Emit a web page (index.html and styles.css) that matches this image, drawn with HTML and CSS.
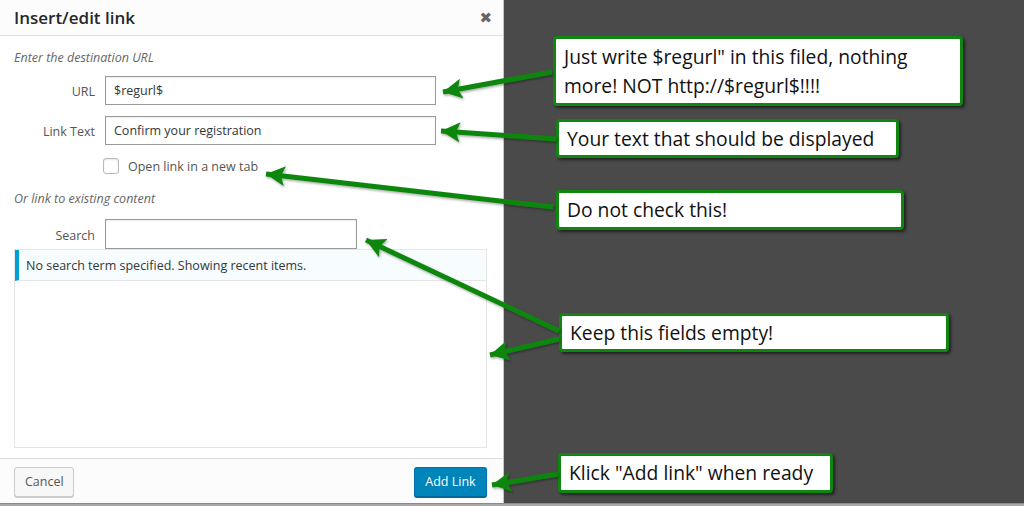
FILE: index.html
```html
<!DOCTYPE html>
<html lang="en">
<head>
<meta charset="utf-8">
<title>Insert/edit link</title>
<link rel="stylesheet" href="styles.css">
</head>
<body>
<div class="page">
  <div class="main">
    <section class="dialog">
      <header class="dlg-head">
        <h1 class="dlg-title">Insert/edit link</h1>
        <span class="dlg-close">&#x2716;</span>
      </header>
      <div class="dlg-body">
        <p class="hint hint-first">Enter the destination URL</p>
        <div class="row row-url">
          <label class="lbl">URL</label>
          <div class="field field-wide">$regurl$</div>
        </div>
        <div class="row row-text">
          <label class="lbl">Link Text</label>
          <div class="field field-wide">Confirm your registration</div>
        </div>
        <div class="check-row">
          <span class="checkbox"></span>
          <span class="check-label">Open link in a new tab</span>
        </div>
        <p class="hint hint-second">Or link to existing content</p>
        <div class="row row-search">
          <label class="lbl">Search</label>
          <div class="field field-search"></div>
        </div>
        <div class="results">
          <div class="notice">No search term specified. Showing recent items.</div>
        </div>
      </div>
      <footer class="dlg-foot">
        <button class="btn btn-cancel">Cancel</button>
        <button class="btn btn-primary">Add Link</button>
      </footer>
    </section>
    <div class="canvas">
      <div class="callout c1">Just write $regurl" in this filed, nothing more! NOT http://$regurl$!!!!</div>
      <div class="callout c2">Your text that should be displayed</div>
      <div class="callout c3">Do not check this!</div>
      <div class="callout c4">Keep this fields empty!</div>
      <div class="callout c5">Klick "Add link" when ready</div>
    </div>
  </div>
  <div class="bottom-strip"></div>
  <svg class="arrows" width="1024" height="506" viewBox="0 0 1024 506">
    <defs>
      <marker id="head" markerUnits="userSpaceOnUse" markerWidth="22" markerHeight="20" refX="19" refY="10" orient="auto">
        <path d="M0 0 L19 10 L0 20 L4 10 Z" fill="#0f860f"/>
      </marker>
      <filter id="sh" x="-10%" y="-50%" width="120%" height="200%">
        <feDropShadow dx="1" dy="1.5" stdDeviation="1" flood-color="#000" flood-opacity="0.35"/>
      </filter>
    </defs>
    <g stroke="#0f860f" stroke-width="5" fill="none" marker-end="url(#head)" filter="url(#sh)">
      <line x1="552" y1="72" x2="443" y2="92"/>
      <line x1="556" y1="139" x2="441" y2="131"/>
      <line x1="553" y1="207" x2="266" y2="174"/>
      <line x1="559" y1="331" x2="366" y2="240"/>
      <line x1="559" y1="339" x2="490" y2="355"/>
      <line x1="558" y1="474" x2="492" y2="485"/>
    </g>
  </svg>
</div>
</body>
</html>
```

FILE: styles.css
```css
* { box-sizing: border-box; }
html, body { margin: 0; padding: 0; }
body {
  width: 1024px;
  height: 506px;
  overflow: hidden;
  font-family: "Open Sans", "Noto Sans", sans-serif;
  font-size: 13px;
  color: #32373c;
}
.page {
  position: relative;
  width: 1024px;
  height: 506px;
  display: flex;
  flex-direction: column;
}
.main {
  display: flex;
  height: 503px;
}
.bottom-strip {
  height: 3px;
  background: #a9a9a9;
  border-top: 1px solid #8a8a8a;
}
.dialog {
  width: 504px;
  height: 503px;
  background: #fff;
  border-right: 1px solid #b9c9dc;
  display: flex;
  flex-direction: column;
}
.dlg-head {
  height: 36px;
  background: #fcfcfc;
  border-bottom: 1px solid #dddddd;
  display: flex;
  align-items: center;
  justify-content: space-between;
  padding: 0 11px 0 14px;
}
.dlg-title {
  margin: 0;
  font-size: 17px;
  font-weight: 600;
  color: #23282d;
  line-height: 34px;
}
.dlg-close {
  color: #666;
  font-size: 15px;
  line-height: 34px;
  font-family: "DejaVu Sans", sans-serif;
}
.dlg-body {
  flex: 1;
  padding: 0 16px 0 14px;
  display: flex;
  flex-direction: column;
}
.hint {
  margin: 0;
  font-style: italic;
  color: #666;
  line-height: 18px;
  font-size: 12.5px;
}
.hint-first { margin-top: 13px; }
.hint-second { margin-top: 15px; }
.row {
  display: flex;
  align-items: center;
  gap: 10px;
}
.row-url { margin-top: 9px; }
.row-text { margin-top: 11px; }
.row-search { margin-top: 11px; }
.lbl {
  width: 81px;
  text-align: right;
  color: #555;
  font-size: 12.5px;
  padding-top: 2px;
}
.field {
  height: 29px;
  border: 1px solid #999;
  box-shadow: inset 0 1px 2px rgba(0,0,0,.07);
  padding: 0 8px;
  display: flex;
  align-items: center;
  color: #32373c;
  font-size: 12.5px;
  background: #fff;
}
.field-wide { width: 331px; }
.field-search { width: 252px; height: 30px; }
.check-row {
  margin-top: 12px;
  padding-left: 89px;
  display: flex;
  align-items: center;
  height: 18px;
}
.checkbox {
  width: 16px;
  height: 16px;
  border: 1px solid #b4b9be;
  border-radius: 3px;
  box-shadow: inset 0 1px 2px rgba(0,0,0,.1);
  background: #fff;
}
.check-label {
  margin-left: 9px;
  color: #555;
  font-size: 12.5px;
}
.results {
  height: 199px;
  width: 473px;
  border: 1px solid #e5e5e5;
  background: #fff;
}
.notice {
  height: 31px;
  background: #f7fcfe;
  border-left: 4px solid #00a0d2;
  border-bottom: 1px solid #e5e5e5;
  padding-left: 7px;
  display: flex;
  align-items: center;
  color: #32373c;
  font-size: 12.5px;
}
.dlg-foot {
  height: 45px;
  background: #fcfcfc;
  border-top: 1px solid #dddddd;
  padding: 8px 16px 0 14px;
  display: flex;
  justify-content: space-between;
  align-items: flex-start;
}
.btn {
  height: 30px;
  border-radius: 3px;
  font-family: "Open Sans", "Noto Sans", sans-serif;
  font-size: 12.5px;
  padding: 0 10px;
  line-height: 28px;
  cursor: pointer;
}
.btn-cancel {
  width: 60px;
  background: #f7f7f7;
  border: 1px solid #cccccc;
  color: #555;
  box-shadow: 0 1px 0 #cccccc;
}
.btn-primary {
  width: 73px;
  background: #0085ba;
  border: 1px solid #0073aa;
  border-bottom-color: #006799;
  color: #fff;
  box-shadow: 0 1px 0 #006799;
}
.canvas {
  flex: 1;
  position: relative;
  background: #4a4a4a;
}
.callout {
  position: absolute;
  background: #fff;
  border: 3px solid #0f860f;
  border-radius: 4px;
  box-shadow: 2px 2px 3px rgba(0,0,0,.55);
  color: #111;
  font-size: 19.3px;
  line-height: 28px;
  padding: 3px 8px;
  display: flex;
  align-items: center;
}
.c1 { left: 49px; top: 36px; width: 410px; height: 70px; line-height: 29px; padding: 4px 8px; }
.c2 { left: 52px; top: 119px; width: 343px; height: 39px; }
.c3 { left: 52px; top: 190px; width: 348px; height: 40px; }
.c4 { left: 55px; top: 313px; width: 390px; height: 39px; }
.c5 { left: 54px; top: 453px; width: 275px; height: 40px; }
.arrows {
  position: absolute;
  left: 0;
  top: 0;
  pointer-events: none;
}
```
